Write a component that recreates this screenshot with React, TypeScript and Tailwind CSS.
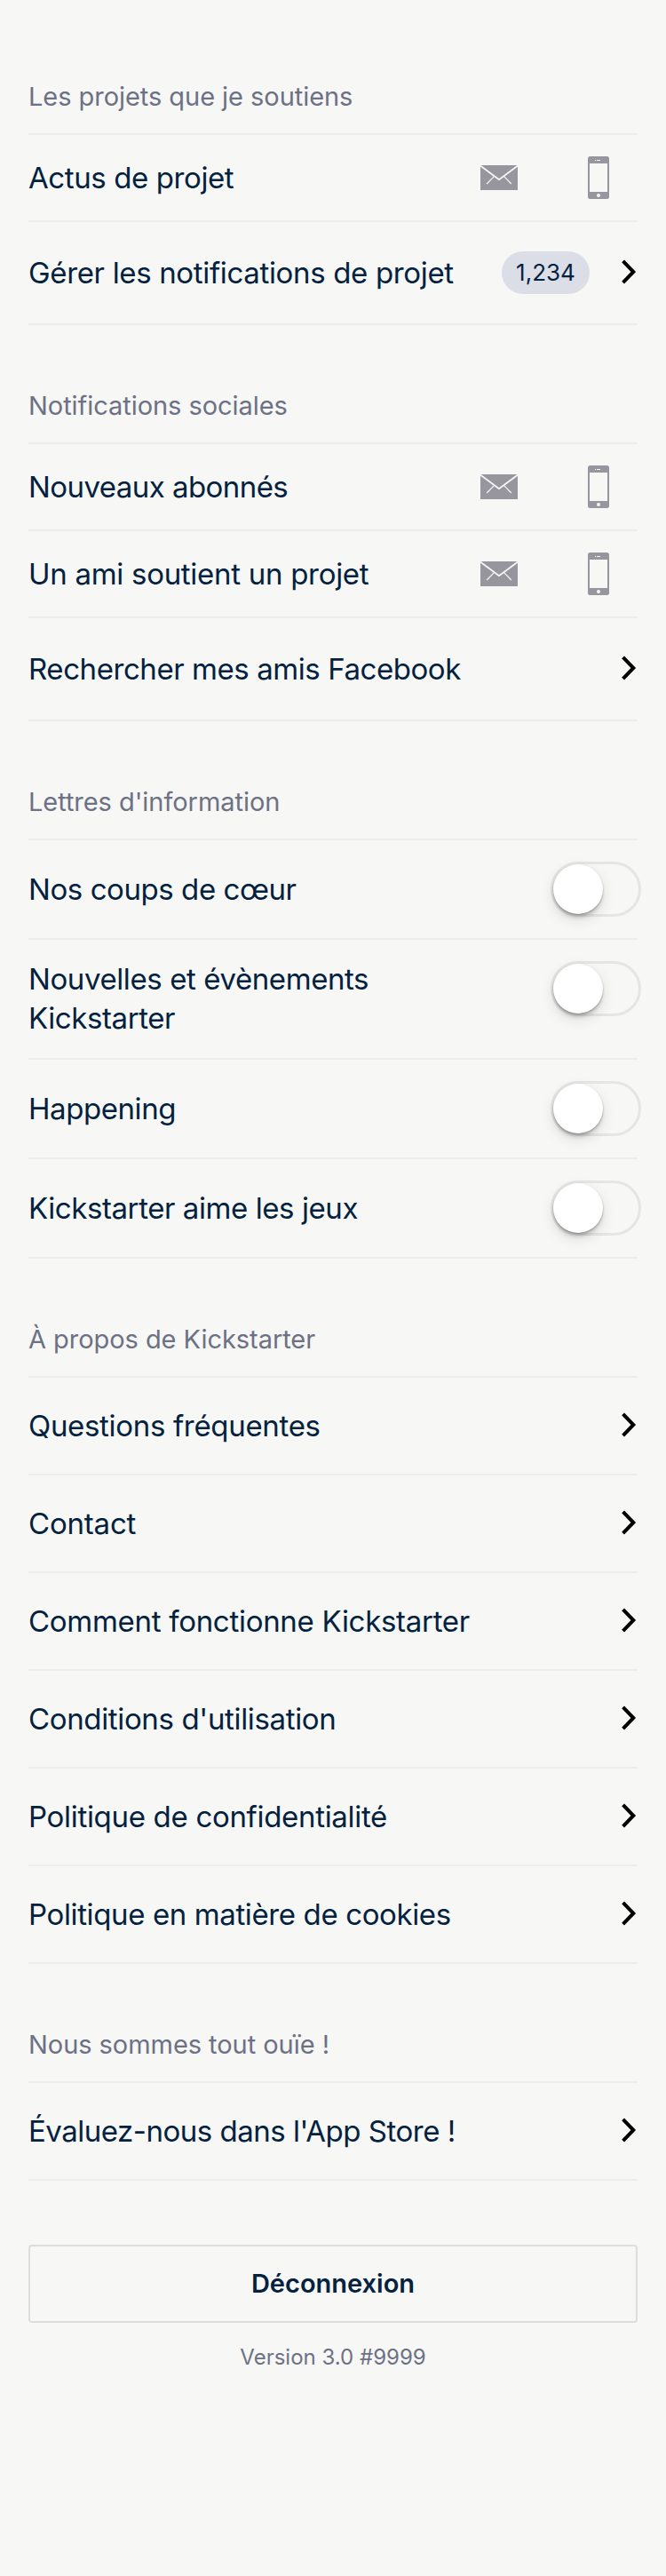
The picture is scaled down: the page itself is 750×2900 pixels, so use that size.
import React from "react";

const Mail = () => (
  <svg width="42" height="28" viewBox="0 0 42 28" className="block shrink-0">
    <rect width="42" height="28" fill="#97969f" />
    <path d="M0 0.6 L21 16.2 L42 0.6" fill="none" stroke="#f7f7f5" strokeWidth="1.8" />
    <path d="M15.6 12.4 L7.2 21 M26.4 12.4 L34.8 21" fill="none" stroke="#f7f7f5" strokeWidth="1.2" />
  </svg>
);

const Phone = () => (
  <svg width="24" height="48" viewBox="0 0 24 48" className="block shrink-0">
    <rect width="24" height="48" rx="2.5" fill="#97969f" />
    <rect x="2" y="8" width="20" height="32" fill="#f7f7f5" />
    <rect x="10" y="4" width="4" height="1" fill="#f7f7f5" />
    <rect x="8" y="4" width="1" height="1" fill="#f7f7f5" />
    <circle cx="12" cy="44" r="2" fill="#f7f7f5" />
  </svg>
);

const Chevron = () => (
  <svg width="18" height="28" viewBox="0 0 18 28" className="mb-0.5 block shrink-0">
    <path d="M1.6 1.8 L13.3 14 L1.6 26.2" fill="none" stroke="#000" strokeWidth="4" />
  </svg>
);

const Toggle = ({ className = "" }: { className?: string }) => (
  <div className={`-mr-1 h-[62px] w-[102px] shrink-0 rounded-full border-[3px] border-[#e5e5e4] ${className}`}>
    <div className="h-14 w-14 rounded-full bg-white shadow-[0_6px_16px_rgba(0,0,0,0.12),0_5px_4px_-1px_rgba(0,0,0,0.16),0_1px_2px_rgba(0,0,0,0.26)]" />
  </div>
);

const Header = ({ children }: { children: React.ReactNode }) => (
  <h2 className="flex h-[134px] items-end border-b-2 border-[#ededec] pb-[20px] text-[29px] leading-[42px] tracking-[-0.05px] text-[#6c7185]">
    <span>{children}</span>
  </h2>
);

type RowProps = { label: string; height: string; track: string; children?: React.ReactNode };

const Row = ({ label, height, track, children }: RowProps) => (
  <div className={`flex items-center justify-between border-b-2 border-[#ededec] ${height}`}>
    <span className={`whitespace-nowrap ${track}`}>{label}</span>
    {children}
  </div>
);

const Channels = () => (
  <div className="flex items-center gap-[79px] pr-8">
    <Mail />
    <Phone />
  </div>
);

export default function App() {
  return (
    <main className="h-[2900px] w-[750px] bg-[#f7f7f5] px-8 pt-[18px] font-['Inter',sans-serif] text-[33px] leading-[44px] text-[#04223f]">
      <Header>Les projets que je soutiens</Header>
      <Row label="Actus de projet" height="h-[98px]" track="tracking-[-0.4px]"><Channels /></Row>
      <Row label="Gérer les notifications de projet" height="h-[116px]" track="tracking-[-0.34px]">
        <div className="flex items-center">
          <span className="mr-9 flex h-12 w-[99px] items-center justify-center rounded-full bg-[#dcdee7] text-[26px]">1,234</span>
          <Chevron />
        </div>
      </Row>

      <Header>Notifications sociales</Header>
      <Row label="Nouveaux abonnés" height="h-[98px]" track="tracking-[-0.56px]"><Channels /></Row>
      <Row label="Un ami soutient un projet" height="h-[98px]" track="tracking-[-0.29px]"><Channels /></Row>
      <Row label="Rechercher mes amis Facebook" height="h-[116px]" track="tracking-[-0.43px]"><Chevron /></Row>

      <Header>Lettres d'information</Header>
      <Row label="Nos coups de cœur" height="h-28" track="tracking-[-0.43px]"><Toggle /></Row>
      <div className="flex h-[135px] items-start justify-between border-b-2 border-[#ededec] pt-[22px]">
        <span className="tracking-[-0.41px]">Nouvelles et évènements<br />Kickstarter</span>
        <Toggle className="mt-0.5" />
      </div>
      <Row label="Happening" height="h-28" track="tracking-[-0.43px]"><Toggle /></Row>
      <Row label="Kickstarter aime les jeux" height="h-28" track="tracking-[-0.42px]"><Toggle /></Row>

      <Header>À propos de Kickstarter</Header>
      <Row label="Questions fréquentes" height="h-[110px]" track="tracking-[-0.32px]"><Chevron /></Row>
      <Row label="Contact" height="h-[110px]" track="tracking-[-0.2px]"><Chevron /></Row>
      <Row label="Comment fonctionne Kickstarter" height="h-[110px]" track="tracking-[-0.29px]"><Chevron /></Row>
      <Row label="Conditions d'utilisation" height="h-[110px]" track="tracking-[-0.35px]"><Chevron /></Row>
      <Row label="Politique de confidentialité" height="h-[110px]" track="tracking-[-0.31px]"><Chevron /></Row>
      <Row label="Politique en matière de cookies" height="h-[110px]" track="tracking-[-0.38px]"><Chevron /></Row>

      <Header>Nous sommes tout ouïe !</Header>
      <Row label="Évaluez-nous dans l'App Store !" height="h-[110px]" track="tracking-[-0.49px]"><Chevron /></Row>

      <button className="mt-[72px] flex h-[88px] w-full items-center justify-center rounded border-2 border-[#dcdedd] text-[29px] font-semibold">
        Déconnexion
      </button>
      <p className="mt-[19px] text-center text-2xl leading-[40px] text-[#6c7185]">Version 3.0 #9999</p>
    </main>
  );
}
